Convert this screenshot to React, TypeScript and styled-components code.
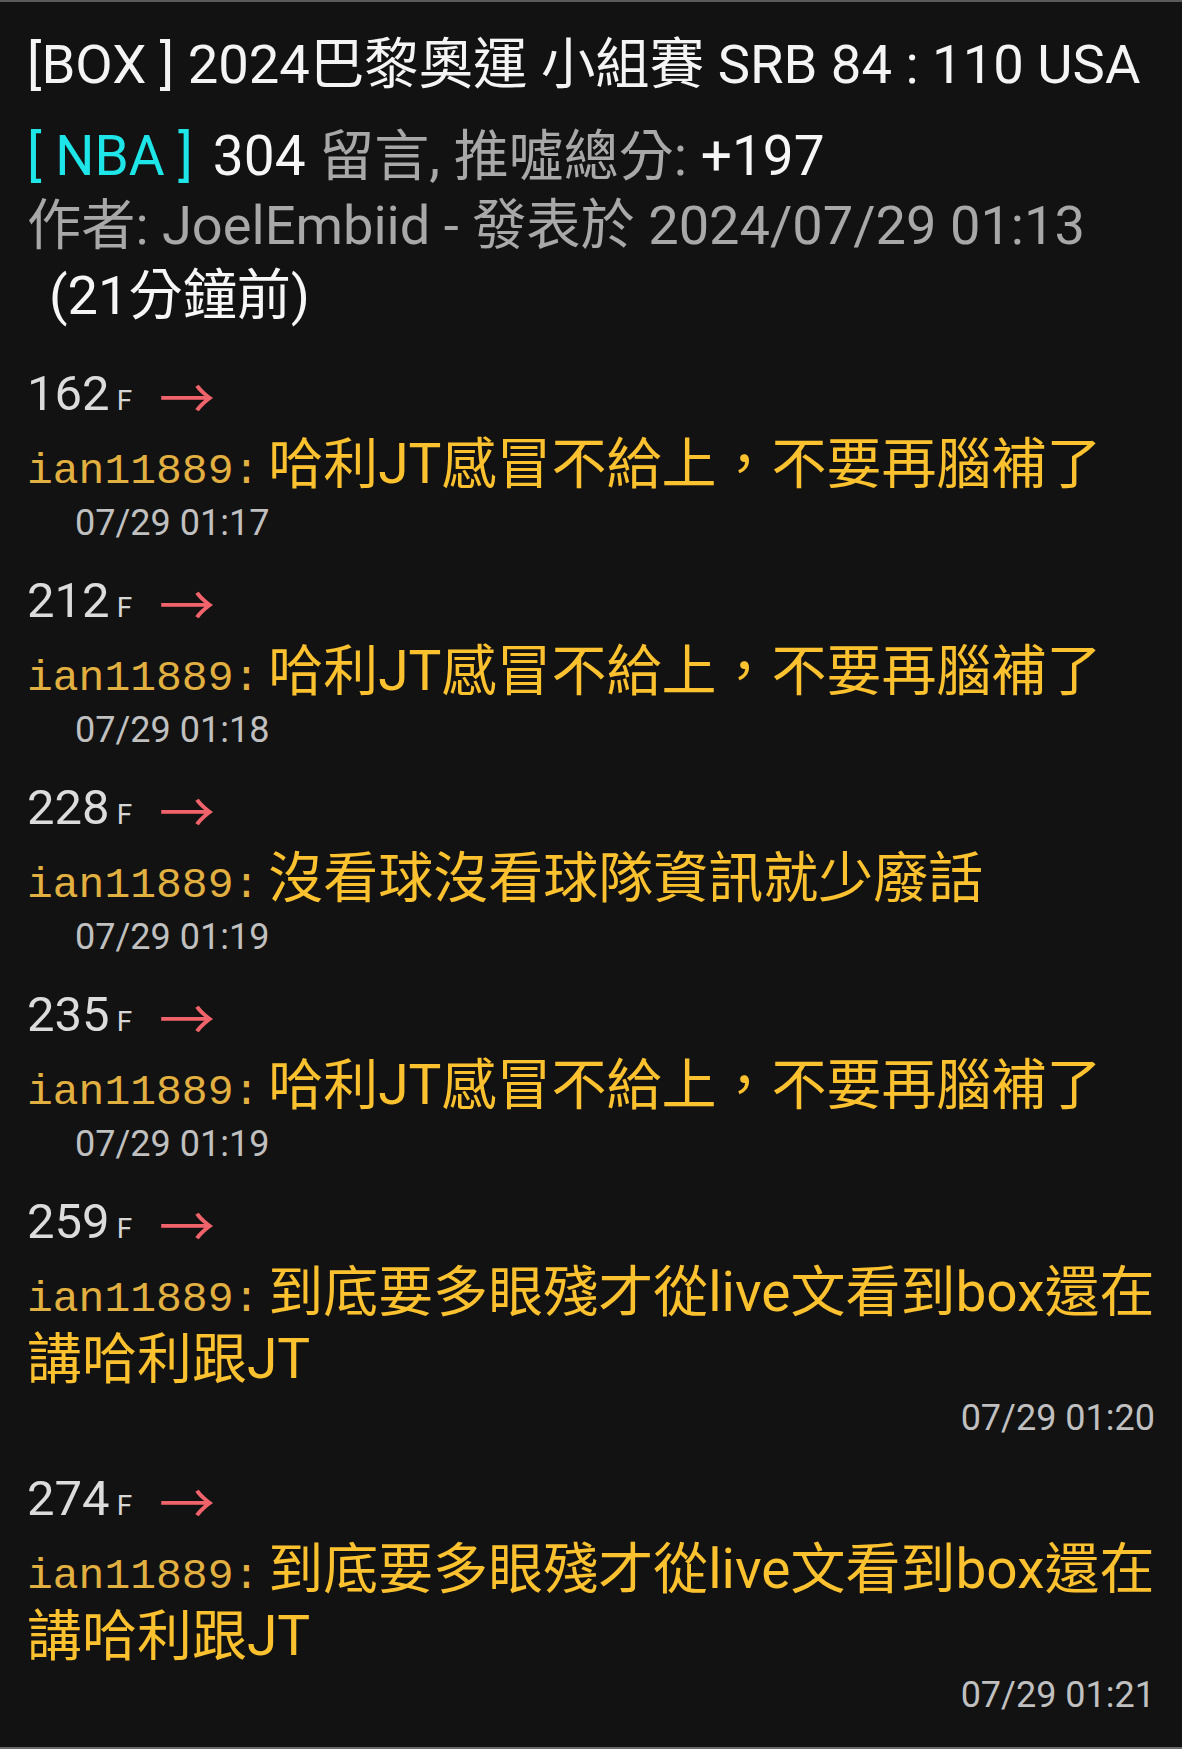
import React from "react";
import styled, { createGlobalStyle } from "styled-components";

const GlobalStyle = createGlobalStyle`
  html, body {
    margin: 0;
    padding: 0;
    background: #121212;
  }
  body {
    font-family: Roboto, "Noto Sans CJK TC", sans-serif;
  }
`;

const Page = styled.div`
  min-height: 100vh;
  box-sizing: border-box;
  border-top: 2px solid #5b5b5b;
  border-bottom: 2px solid #6a6a6a;
  padding: 28px 27px 0;
  background: #121212;
  font-family: Roboto, "Noto Sans CJK TC", sans-serif;
`;

const Title = styled.h1`
  margin: 0;
  font-size: 54.4px;
  font-weight: 400;
  line-height: 70px;
  color: #f4f4f4;
  white-space: nowrap;
`;

const Meta = styled.div`
  margin-top: 21px;
  line-height: 70px;
  color: #a8a8a8;
`;

const BoardLine = styled.div`
  font-size: 55px;
  white-space: nowrap;
`;

const Tone = styled.span<{ $tone: "cyan" | "white" | "gray"; $gap?: number }>`
  color: ${(p) =>
    p.$tone === "cyan" ? "#1ee6e8" : p.$tone === "white" ? "#f6f6f6" : "#a8a8a8"};
  margin-left: ${(p) => (p.$gap ? `${p.$gap}px` : "0")};
`;

const AuthorLine = styled.div`
  font-size: 54.2px;
`;

const Ago = styled.span`
  display: inline-block;
  margin-left: 22px;
  color: #f6f6f6;
`;

const CommentList = styled.div`
  margin-top: 33px;
  display: flex;
  flex-direction: column;
  gap: 23px;
`;

const Comment = styled.div`
  display: flex;
  flex-direction: column;
`;

const FloorLine = styled.div`
  height: 60px;
  line-height: 60px;
  font-size: 49px;
  color: #dcdcdc;
  white-space: nowrap;
`;

const FloorMark = styled.span`
  margin-left: 7px;
  font-size: 28px;
  color: #d6d6d6;
`;

const Arrow = styled.span`
  display: inline-block;
  margin-left: 27px;
  font-family: "Noto Sans CJK TC", sans-serif;
  font-size: 56px;
  line-height: 1;
  color: #f1636b;
  vertical-align: -9px;
`;

const Content = styled.div`
  margin-top: 7px;
  font-size: 55px;
  line-height: 67px;
  color: #fbc12e;
  word-break: break-all;
`;

const User = styled.span`
  font-family: "Liberation Mono", monospace;
  font-size: 43px;
  line-height: 1;
  color: #e2b040;
`;

const Text = styled.span`
  margin-left: 9px;
`;

const Time = styled.div<{ $align: "indent" | "right" }>`
  margin-top: 1px;
  margin-bottom: ${(p) => (p.$align === "right" ? "3px" : "0")};
  font-size: 36px;
  line-height: 49px;
  color: #c0c0c0;
  text-align: ${(p) => (p.$align === "right" ? "right" : "left")};
  padding-left: ${(p) => (p.$align === "right" ? "0" : "48px")};
`;

type Item = {
  floor: number;
  user: string;
  text: string;
  time: string;
  align: "indent" | "right";
};

const comments: Item[] = [
  { floor: 162, user: "ian11889", text: "哈利JT感冒不給上，不要再腦補了", time: "07/29 01:17", align: "indent" },
  { floor: 212, user: "ian11889", text: "哈利JT感冒不給上，不要再腦補了", time: "07/29 01:18", align: "indent" },
  { floor: 228, user: "ian11889", text: "沒看球沒看球隊資訊就少廢話", time: "07/29 01:19", align: "indent" },
  { floor: 235, user: "ian11889", text: "哈利JT感冒不給上，不要再腦補了", time: "07/29 01:19", align: "indent" },
  { floor: 259, user: "ian11889", text: "到底要多眼殘才從live文看到box還在講哈利跟JT", time: "07/29 01:20", align: "right" },
  { floor: 274, user: "ian11889", text: "到底要多眼殘才從live文看到box還在講哈利跟JT", time: "07/29 01:21", align: "right" },
];

export default function App() {
  return (
    <>
      <GlobalStyle />
      <Page>
        <Title>[BOX ] 2024巴黎奧運 小組賽 SRB 84 : 110 USA</Title>
        <Meta>
          <BoardLine>
            <Tone $tone="cyan">[ NBA ]</Tone>
            <Tone $tone="white" $gap={20}>304</Tone>{" "}
            <Tone $tone="gray">留言, 推噓總分:</Tone> <Tone $tone="white">+197</Tone>
          </BoardLine>
          <AuthorLine>
            作者: JoelEmbiid - 發表於 2024/07/29 01:13
            <Ago>(21分鐘前)</Ago>
          </AuthorLine>
        </Meta>
        <CommentList>
          {comments.map((c, i) => (
            <Comment key={i}>
              <FloorLine>
                {c.floor}
                <FloorMark>F</FloorMark>
                <Arrow>→</Arrow>
              </FloorLine>
              <Content>
                <User>{c.user}:</User>
                <Text>{c.text}</Text>
              </Content>
              <Time $align={c.align}>{c.time}</Time>
            </Comment>
          ))}
        </CommentList>
      </Page>
    </>
  );
}
